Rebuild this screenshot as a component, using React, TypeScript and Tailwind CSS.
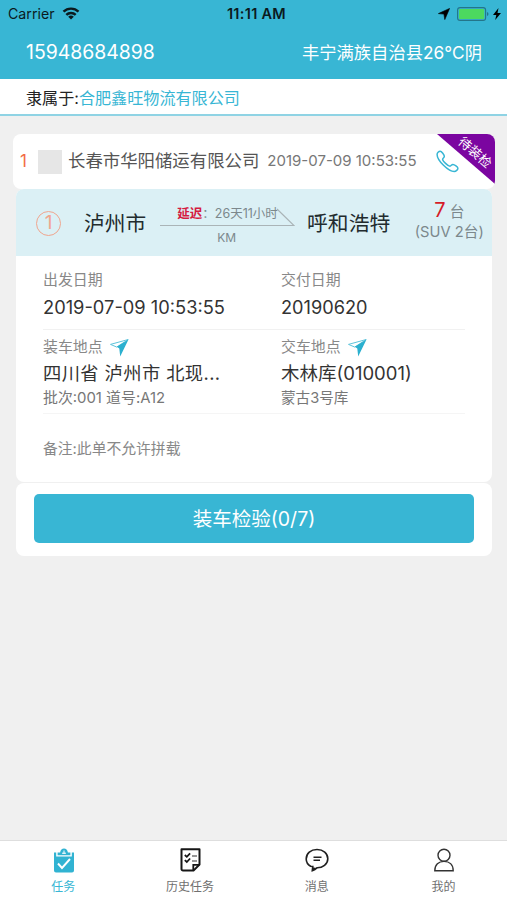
import type { ReactNode } from "react";

function WifiIcon() {
  return (
    <svg className="h-[13px] w-[18px]" viewBox="0 0 17 13" fill="none" stroke="#0b1a1e" strokeWidth="2.4">
      <path d="M1 4.7a10.6 10.6 0 0 1 15 0" />
      <path d="M3.8 7.9a6.7 6.7 0 0 1 9.4 0" />
      <path d="M8.5 12.6 5.7 9.8a4 4 0 0 1 5.6 0z" fill="#0b1a1e" stroke="none" />
    </svg>
  );
}

function PhoneIcon() {
  return (
    <svg className="h-[23px] w-[23px]" viewBox="0 0 23 23" fill="none" stroke="#38b6d4" strokeWidth="1.5" strokeLinejoin="round">
      <path d="M1.100 4.400C1.100 2.800 2.700 1.200 4.200 1.200c1.400 0 4.100 3.800 4.100 5.200 0 1.300-1.700 1.800-1.700 2.800 0 1.900 5.400 7 7.400 7 1.100 0 1.600-1.800 2.900-1.800 1.500 0 5 2.400 5 3.800 0 1.500-1.900 3.300-3.700 3.300C12.500 21.500 1.100 10.500 1.100 4.400z" />
    </svg>
  );
}

function NavigateIcon() {
  return (
    <svg className="mt-[2px] h-[18px] w-[19px]" viewBox="0 0 19 18">
      <path d="M.5 5.400 18.200.500 6.800 8.100z" fill="#fff" stroke="#5cc3da" strokeWidth="1" />
      <path d="M18.500.4 10.200 17.400 9.300 9.500 6.800 7.800z" fill="#2bb0cf" />
    </svg>
  );
}

function TaskIcon() {
  return (
    <svg className="ml-[2px] h-[25px] w-[20px]" viewBox="0 0 20 25">
      <path d="M0 4.500h2.200v4h15.600v-4H20V22.500a2 2 0 0 1-2 2H2a2 2 0 0 1-2-2z" fill="#31b3d2" />
      <path d="M3.600 7.200V4.500h2.500C6.500 2 8 .6 10 .6s3.500 1.400 3.900 3.900h2.500v2.700z" fill="#31b3d2" />
      <path d="M8 5.200h4M10 2.500v3.500" stroke="#fff" strokeWidth="1" />
      <path d="m4 15.500 4 4.500 8-9" stroke="#fff" strokeWidth="1.900" fill="none" />
    </svg>
  );
}

function HistoryIcon() {
  return (
    <svg className="h-[24px] w-[21px]" viewBox="0 0 21 24" fill="none" stroke="#161616" strokeWidth="2">
      <path d="M13.500 22.600H3a1.500 1.500 0 0 1-1.500-1.500V1.300h18V16.500z" strokeLinejoin="round" />
      <path d="M13.300 22.300v-5.500h6" strokeWidth="1.800" />
      <path d="m4.800 7 2 1.800 3.300-3.500M4.800 12.200l2 1.800 3.300-3.500" strokeWidth="1.800" />
      <path d="M12 8h5M12 13h5" stroke="#777" strokeWidth="1.300" />
    </svg>
  );
}

function MessageIcon() {
  return (
    <svg className="h-[24px] w-[24px]" viewBox="0 0 24 24" fill="none" stroke="#202020" strokeWidth="1.600">
      <path d="M5.600 18.200C2.800 16.500 1.200 14 1.200 10.900 1.200 5.500 5.800 1.500 12 1.500s10.800 4 10.800 9.200c0 5.600-5.300 9-10.500 9-2 1.800-3.200 2.400-5 3l.5-4.300z" />
      <path d="m7.300 19.200-.2 3.800 4.400-2.900z" fill="#202020" stroke="none" />
      <path d="M8.500 9.300h8M8.500 12.300h6.500" strokeWidth="1.400" />
    </svg>
  );
}

function ProfileIcon() {
  return (
    <svg className="h-[24px] w-[20px]" viewBox="0 0 20 24" fill="none" stroke="#333" strokeWidth="1.400">
      <circle cx="10" cy="7.300" r="6" />
      <path d="M.8 22.700c0-6 3.800-9.300 9.200-9.300s9.200 3.300 9.200 9.300z" />
    </svg>
  );
}

function Tab({ icon, label, active = false }: { icon: ReactNode; label: string; active?: boolean }) {
  return (
    <button className="flex flex-1 flex-col items-center pt-[6px]">
      <span className="flex h-[26px] items-center">{icon}</span>
      <span className={`mt-[5px] text-[12px] leading-[18px] ${active ? "text-[#38b6d4]" : "text-[#707070]"}`}>{label}</span>
    </button>
  );
}

export default function App() {
  return (
    <div className="flex h-[900px] w-[507px] flex-col overflow-hidden whitespace-nowrap bg-[#f0f0f0] font-['Inter','Noto_Sans_CJK_SC',sans-serif]">
      <header className="h-[79px] shrink-0 bg-[#38b6d4]">
        <div className="grid h-[27px] grid-cols-3 items-center text-[14.200px] text-[#0b1a1e]">
          <div className="flex items-center gap-[7px] pl-[8px]">
            <span>Carrier</span>
            <WifiIcon />
          </div>
          <span className="pl-[6px] text-center text-[14.500px] font-semibold tracking-[0.300px]">11:11 AM</span>
          <div className="flex items-center justify-end pr-[6px]">
            <svg className="h-[12px] w-[12px]" viewBox="0 0 12 12">
              <path d="M11.600.4 6.800 11.600 5.900 6.100.4 5.600z" fill="#000" stroke="#000" strokeWidth=".6" strokeLinejoin="round" />
            </svg>
            <svg className="ml-[7px] h-[14px] w-[32px]" viewBox="0 0 32 14">
              <rect x=".6" y=".6" width="28" height="12.800" rx="2.500" fill="none" stroke="#24758a" strokeWidth="1.100" />
              <rect x="2" y="2" width="25.200" height="10" rx="1.200" fill="#4cd95f" />
              <path d="M30 5v4q1.500-.5 1.500-2T30 5z" fill="#24758a" />
            </svg>
            <svg className="ml-[4px] h-[12px] w-[8px]" viewBox="0 0 8 12">
              <path d="M5.500 0 0 7h3.300L2.200 12 8 5H4.500z" fill="#000" />
            </svg>
          </div>
        </div>
        <div className="flex h-[51px] items-center justify-between pl-[26px] pr-[25px] text-white">
          <span className="text-[19.400px]">15948684898</span>
          <span className="text-[17.300px]">丰宁满族自治县26°C阴</span>
        </div>
      </header>
      <div className="flex h-[37px] shrink-0 items-center border-b-2 border-[#8fd3e4] bg-white pl-[26px] pt-[3px] text-[16.100px] text-[#222]">
        隶属于:<span className="text-[#38b6d4]">合肥鑫旺物流有限公司</span>
      </div>

      <main className="flex-1 pl-[13px] pr-[12px] pt-[18px]">
        <section className="relative flex h-[55px] items-center overflow-hidden rounded-[8px] bg-white pl-[7px]">
          <span className="w-[18px] text-[17px] text-[#f26b45]">1</span>
          <span className="h-[24px] w-[24px] bg-[#e6e6e6]" />
          <span className="ml-[6px] text-[17.400px] text-[#555]">长春市华阳储运有限公司</span>
          <span className="ml-[8px] text-[15px] text-[#777]">2019-07-09 10:53:55</span>
          <span className="ml-[19px]"><PhoneIcon /></span>
          <svg className="absolute right-0 top-0 h-[50px] w-[58px]" viewBox="0 0 58 50">
            <path d="M0 0h58v50z" fill="#7b05a0" />
            <text x="38" y="23" transform="rotate(41 38 18.500)" textAnchor="middle" fontSize="13" fill="#fff">待装检</text>
          </svg>
        </section>

        <section className="ml-[3px] mr-[3px] h-[293px] overflow-hidden rounded-[8px] bg-white">
          <div className="flex h-[67px] items-center bg-[#dbf0f5] pt-px">
            <span className="ml-[20px] flex h-[25px] w-[25px] items-center justify-center rounded-full border border-[#f0a58e] text-[19px] text-[#f0a58e]">1</span>
            <span className="ml-[23px] pt-[2px] text-[20.700px] text-[#222b2e]">泸州市</span>
            <div className="ml-[14px] flex h-[56px] w-[135px] flex-col items-center">
              <span className="mt-[9px] h-[19px] text-[12.500px] leading-[19px] text-[#7c888c]">
                <b className="font-bold text-[#d51c42]">延迟</b>：26天11小时
              </span>
              <svg className="-mt-[16px] h-[20px] w-[135px] shrink-0" viewBox="0 0 135 20" fill="none" stroke="#aab4b7" strokeWidth="1.200">
                <path d="M0 18.500h134L117 2" />
              </svg>
              <span className="mt-[3px] pr-[2px] text-[12px] leading-[16px] text-[#7c888c]">KM</span>
            </div>
            <span className="ml-[12px] pt-[2px] text-[20.800px] text-[#222b2e]">呼和浩特</span>
            <div className="ml-[24px] w-[70px] pb-[5px] text-center text-[14.700px] text-[#7c888c]">
              <p className="leading-[22px]"><span className="text-[20px] text-[#d51c28]">7</span> 台</p>
              <p className="leading-[19px]">(SUV 2台)</p>
            </div>
          </div>
          <div className="mx-[27px]">
            <div className="grid h-[74px] grid-cols-[238px_1fr] border-b border-[#f1f1f1] pt-[14px]">
              <div>
                <p className="text-[14.900px] leading-[20px] text-[#888]">出发日期</p>
                <p className="mt-[4px] text-[18.300px] leading-[26px] text-[#333]">2019-07-09 10:53:55</p>
              </div>
              <div>
                <p className="text-[14.900px] leading-[20px] text-[#888]">交付日期</p>
                <p className="mt-[4px] text-[18.200px] leading-[26px] text-[#333]">20190620</p>
              </div>
            </div>
            <div className="grid h-[84px] grid-cols-[238px_1fr] border-b border-[#f5f5f5] pt-[6px]">
              <div>
                <p className="flex items-center gap-[7px] text-[14.900px] leading-[22px] text-[#888]">装车地点<NavigateIcon /></p>
                <p className="mt-[2px] text-[18.300px] leading-[26px] tracking-[0.400px] text-[#333]">四川省 泸州市 北现...</p>
                <p className="mt-[1px] text-[14.900px] leading-[22px] text-[#777]">批次:001 道号:A12</p>
              </div>
              <div>
                <p className="flex items-center gap-[7px] text-[14.900px] leading-[22px] text-[#888]">交车地点<NavigateIcon /></p>
                <p className="mt-[2px] text-[18.500px] leading-[26px] text-[#333]">木林库(010001)</p>
                <p className="mt-[1px] text-[14.600px] leading-[22px] text-[#777]">蒙古3号库</p>
              </div>
            </div>
            <p className="mt-[24px] text-[14.800px] leading-[22px] text-[#888]">备注:此单不允许拼载</p>
          </div>
        </section>

        <section className="ml-[3px] mr-[3px] mt-px h-[73px] rounded-[8px] bg-white px-[18px] pt-[11px]">
          <button className="h-[49px] w-full rounded-[5px] bg-[#38b6d4] pt-[3px] text-[19.500px] text-white">装车检验(0/7)</button>
        </section>
      </main>

      <nav className="flex h-[60px] shrink-0 border-t border-[#dedede] bg-white">
        <Tab icon={<TaskIcon />} label="任务" active />
        <Tab icon={<HistoryIcon />} label="历史任务" />
        <Tab icon={<MessageIcon />} label="消息" />
        <Tab icon={<ProfileIcon />} label="我的" />
      </nav>
    </div>
  );
}
